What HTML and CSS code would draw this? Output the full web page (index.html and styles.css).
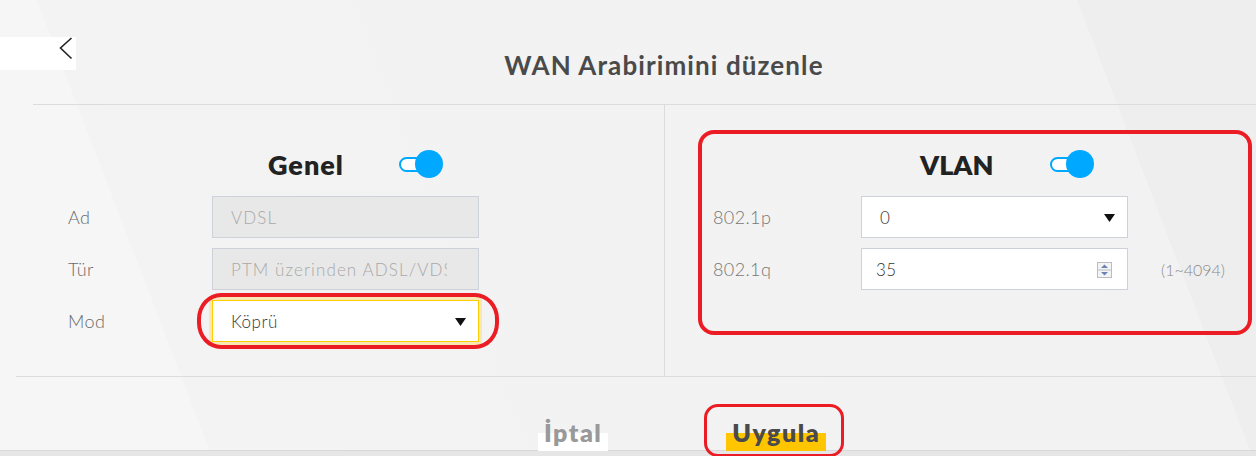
FILE: index.html
```html
<!DOCTYPE html>
<html lang="tr">
<head>
  <meta charset="UTF-8">
  <title>WAN Arabirimini düzenle</title>
  <link rel="stylesheet" href="styles.css">
</head>
<body>
  <header class="topbar">
    <a class="back" href="#">
      <svg width="14" height="23" viewBox="0 0 14 23"><path d="M12.5 1 L1.5 11 L12.5 21.5" fill="none" stroke="#222" stroke-width="1.6"/></svg>
    </a>
    <h1 class="title">WAN Arabirimini düzenle</h1>
  </header>

  <div class="panels">
    <section class="panel panel-left">
      <div class="panel-head">
        <h2>Genel</h2>
        <span class="toggle on"></span>
      </div>
      <div class="rows">
        <label>Ad</label>
        <div class="field disabled"><span class="clip">VDSL</span></div>
        <label>Tür</label>
        <div class="field disabled"><span class="clip">PTM üzerinden ADSL/VDSL</span></div>
        <label>Mod</label>
        <div class="field select focused">
          Köprü
          <svg class="caret" width="11" height="8" viewBox="0 0 11 8"><path d="M0 0 H11 L5.5 8 Z" fill="#111"/></svg>
          <span class="mark mark-oval"></span>
        </div>
      </div>
    </section>

    <section class="panel panel-right">
      <div class="mark-box">
        <div class="panel-head">
          <h2>VLAN</h2>
          <span class="toggle on"></span>
        </div>
        <div class="rows">
          <label>802.1p</label>
          <div class="field select">
            0
            <svg class="caret" width="11" height="8" viewBox="0 0 11 8"><path d="M0 0 H11 L5.5 8 Z" fill="#111"/></svg>
          </div>
          <span></span>
          <label>802.1q</label>
          <div class="field number">
            35
            <svg class="spin" width="15" height="16" viewBox="0 0 15 16">
              <rect x="0.5" y="0.5" width="14" height="15" fill="#f4f4f4" stroke="#b9bcc4"/>
              <line x1="1" y1="8" x2="14" y2="8" stroke="#b9bcc4"/>
              <path d="M4 6 L7.5 2.5 L11 6 Z" fill="#6a82b8"/>
              <path d="M4 10 L11 10 L7.5 13.5 Z" fill="#6a82b8"/>
            </svg>
          </div>
          <span class="range">(1~4094)</span>
        </div>
      </div>
    </section>
  </div>

  <footer class="actions">
    <span class="btn btn-cancel">İptal</span>
    <span class="mark-btn">
      <span class="btn btn-apply">Uygula</span>
    </span>
  </footer>
</body>
</html>
```

FILE: styles.css
```css
html, body {
  margin: 0;
  height: 456px;
  overflow: hidden;
}

body {
  font-family: Lato, "Liberation Sans", sans-serif;
  background:
    linear-gradient(to bottom, transparent 450px, #d8d8d8 450px, #d8d8d8 451px, #e6e6e6 451px),
    linear-gradient(69deg, #f6f6f6 14.8%, #f3f3f3 14.8%, #f2f2f2 87.5%, #eeeeee 87.5%);
}

/* top */
.topbar {
  display: grid;
  grid-template-columns: 76px 1fr;
  height: 104px;
}

.back {
  display: flex;
  align-items: flex-start;
  margin-top: 37px;
  height: 33px;
  padding-left: 59px;
  background-color: #fff;
}

.title {
  margin: 52px 4px 0 0;
  text-align: center;
  font-size: 26px;
  line-height: 26px;
  font-weight: 700;
  letter-spacing: 1.1px;
  color: #4a4a4a;
}

/* panels */
.panels {
  display: grid;
  grid-template-columns: 632px 1fr;
  height: 271px;
  margin-left: 33px;
  border-top: 1px solid #dcdcdc;
}

.panel-left {
  border-right: 1px solid #dcdcdc;
}

.panel-head {
  display: flex;
  align-items: center;
  gap: 55px;
  height: 36px;
}

.panel-head h2 {
  margin: 0;
  font-size: 27px;
  font-weight: 800;
  letter-spacing: 1px;
  color: #222;
}

.panel-left .panel-head {
  margin: 41px 0 14px 235px;
}

.toggle {
  position: relative;
  width: 44px;
  height: 28px;
}

.toggle::before {
  content: "";
  position: absolute;
  left: 0;
  top: 7px;
  width: 32px;
  height: 11px;
  border: 2px solid #00a8ff;
  border-radius: 8px;
  background-color: #fff;
}

.toggle::after {
  content: "";
  position: absolute;
  right: 0;
  top: 0;
  width: 28px;
  height: 28px;
  border-radius: 50%;
  background-color: #00a8ff;
}

.rows {
  display: grid;
  grid-template-columns: 144px 267px;
  grid-auto-rows: 42px;
  row-gap: 10px;
  align-items: center;
  padding-left: 35px;
}

.rows label {
  font-size: 18px;
  font-weight: 300;
  letter-spacing: 0.4px;
  color: #6a6a6a;
}

.field {
  position: relative;
  display: flex;
  align-items: center;
  height: 42px;
  box-sizing: border-box;
  padding: 0 18px;
  border: 1px solid #cdd1d9;
  background-color: #fff;
  font-size: 17px;
  font-weight: 300;
  letter-spacing: 0.5px;
  color: #333;
  white-space: nowrap;
}

.field.disabled {
  padding-right: 31px;
  background-color: #e8e8e8;
  color: #a9a9a9;
  letter-spacing: 1.1px;
}

.clip {
  min-width: 0;
  overflow: hidden;
}

.field.focused {
  border-color: #ffcc00;
  box-shadow: 0 0 0 3px #f8e8b4;
}

.caret {
  position: absolute;
  right: 12px;
  top: 17px;
}

.spin {
  position: absolute;
  right: 15px;
  top: 13px;
}

.number {
  padding-left: 14px;
}

/* red annotations */
.mark-oval {
  position: absolute;
  left: -16px;
  right: -21px;
  top: -8px;
  bottom: -8px;
  border: 4px solid #ec1c24;
  border-radius: 24px / 26px;
}

.mark-box {
  width: 554px;
  height: 205px;
  box-sizing: border-box;
  margin: 25px 0 0 33px;
  padding-top: 12px;
  border: 4px solid #ec1c24;
  border-radius: 16px;
}

.mark-box .panel-head {
  margin: 0 0 14px 218px;
  gap: 56px;
}

.mark-box .panel-head h2 {
  letter-spacing: 0;
}

.mark-box .rows {
  grid-template-columns: 148px 267px auto;
  padding-left: 11px;
}

.mark-box .rows label {
  font-size: 18px;
  color: #777;
}

.range {
  margin-left: 33px;
  font-size: 16px;
  font-weight: 300;
  color: #8a8a8a;
}

/* buttons */
.actions {
  display: flex;
  align-items: flex-start;
  gap: 96px;
  height: 79px;
  margin-left: 16px;
  padding: 38px 0 0 522px;
  border-top: 1px solid #dcdcdc;
}

.btn {
  display: inline-block;
  padding: 5px 6px 6px;
  font-size: 25px;
  line-height: 25px;
  font-weight: 800;
  letter-spacing: 1.5px;
}

.btn-cancel {
  color: #999;
  background: linear-gradient(transparent 18px, #fff 18px);
}

.btn-apply {
  color: #4a4a4a;
  background: linear-gradient(transparent 18px, #ffc600 18px);
}

.mark-btn {
  margin-top: -11px;
  padding: 8px 15px 3px 19px;
  border: 3px solid #ec1c24;
  border-radius: 14px;
}
```
